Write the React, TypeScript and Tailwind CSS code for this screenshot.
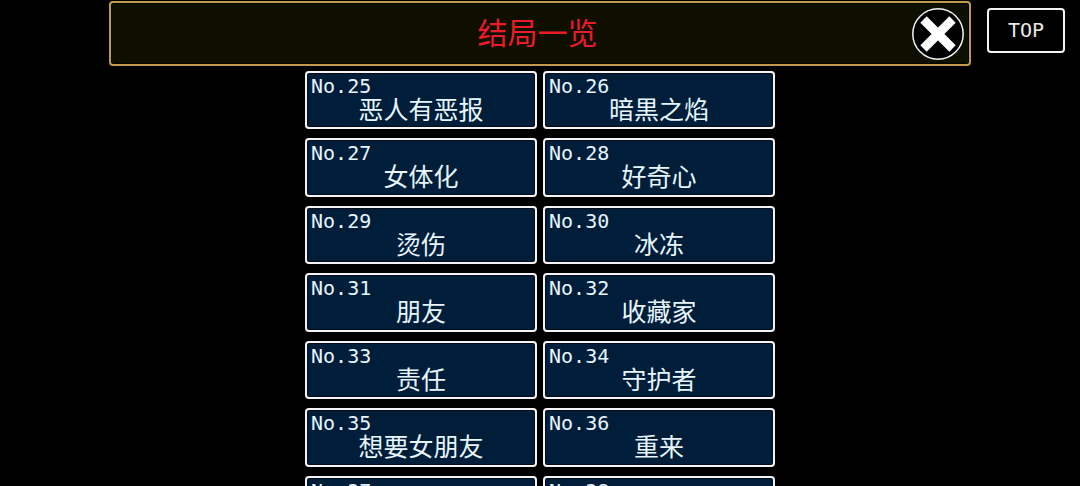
const endings = [
  { no: 25, name: "恶人有恶报" },
  { no: 26, name: "暗黒之焰" },
  { no: 27, name: "女体化" },
  { no: 28, name: "好奇心" },
  { no: 29, name: "烫伤" },
  { no: 30, name: "冰冻" },
  { no: 31, name: "朋友" },
  { no: 32, name: "收藏家" },
  { no: 33, name: "责任" },
  { no: 34, name: "守护者" },
  { no: 35, name: "想要女朋友" },
  { no: 36, name: "重来" },
  { no: 37, name: "" },
  { no: 38, name: "" },
];

function EndingCard({ no, name }: { no: number; name: string }) {
  return (
    <button className="flex flex-col overflow-hidden rounded-[4px] border-2 border-[#f4f4f6] bg-[#001d3a] px-1 pt-0.5 text-[#e6f6fc] shadow-[inset_0_0_0_1px_#050d18]">
      <span className="text-left text-[20px] leading-[22px]">No.{no}</span>
      <span className="w-full text-center text-[25px] leading-[28px]">{name}</span>
    </button>
  );
}

export default function App() {
  return (
    <div className="flex h-screen flex-col overflow-hidden bg-black font-['DejaVu_Sans_Mono','Noto_Sans_CJK_SC',monospace]">
      <div className="grid shrink-0 grid-cols-[109px_1fr_109px] items-start pt-px">
        <header className="col-start-2 grid grid-cols-[1fr_auto_1fr] items-center rounded-[4px] border-2 border-[#c29a49] bg-[#0f0f00] pt-[5px] pr-[5px] pb-1 shadow-[inset_0_0_0_1px_#050500]">
          <h1 className="col-start-2 text-[30px] leading-[48px] text-[#ec1c24]">结局一览</h1>
          <button aria-label="关闭" className="justify-self-end">
            <svg viewBox="0 0 52 52" className="size-[52px]">
              <circle cx="26" cy="26" r="25.2" fill="#000" stroke="#f4f4f4" strokeWidth="1.5" />
              <path d="M11.5 11.5 40.5 40.5M40.5 11.5 11.5 40.5" stroke="#fff" strokeWidth="9" />
            </svg>
          </button>
        </header>

        <div className="pr-[15px] pl-4 pt-[7px]">
          <button className="w-full rounded-[4px] border-2 border-[#f4f4f4] bg-black text-[20px] leading-[41px] text-[#e8e8e8]">
            TOP
          </button>
        </div>
      </div>

      <main className="mx-auto mt-[5px] grid w-full max-w-[470px] auto-rows-[58px_59px] grid-cols-2 gap-x-1.5 gap-y-[9px]">
        {endings.map((e) => (
          <EndingCard key={e.no} no={e.no} name={e.name} />
        ))}
      </main>
    </div>
  );
}
